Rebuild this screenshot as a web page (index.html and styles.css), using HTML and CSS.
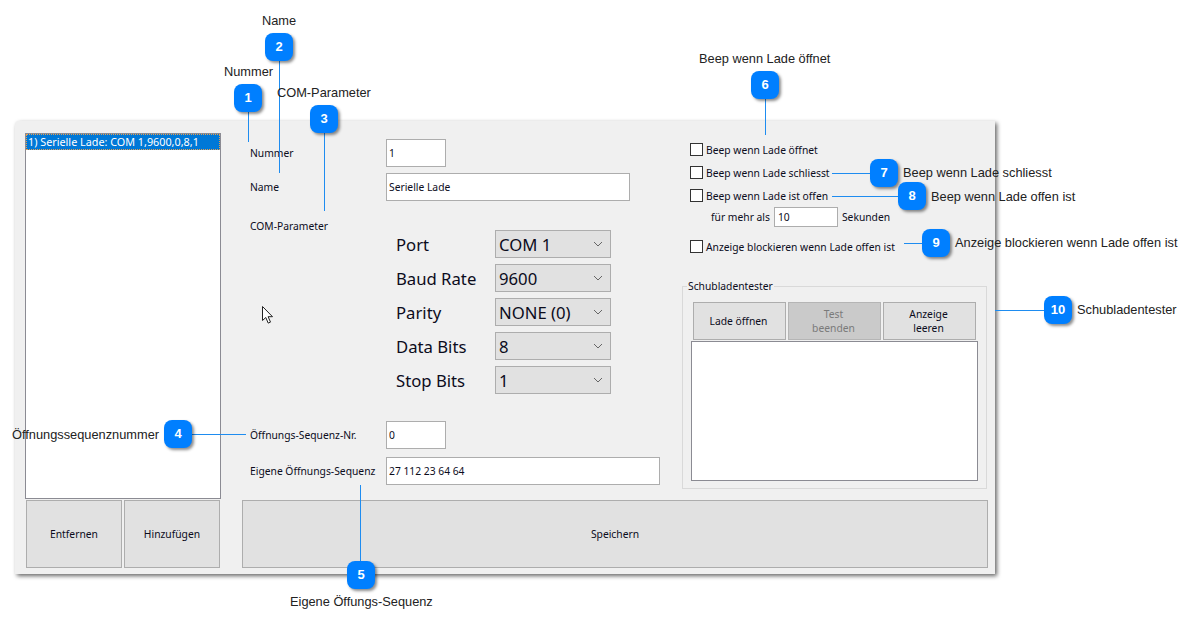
FILE: index.html
```html
<!DOCTYPE html>
<html lang="de">
<head>
<meta charset="utf-8">
<title>Serielle Lade</title>
<link rel="stylesheet" href="styles.css">
</head>
<body>
<div class="window">
  <div class="left">
    <div class="list"><div class="list-item">1) Serielle Lade: COM 1,9600,0,8,1</div></div>
    <div class="list-buttons">
      <button class="btn">Entfernen</button>
      <button class="btn">Hinzufügen</button>
    </div>
  </div>
  <div class="main">
    <div class="upper">
      <div class="form">
        <div class="row"><span class="label">Nummer</span><input class="field short" value="1"></div>
        <div class="row"><span class="label">Name</span><input class="field name" value="Serielle Lade"></div>
        <div class="com">
          <span class="label com-label">COM-Parameter</span>
          <div class="params">
            <span class="p-label">Port</span><div class="combo"><span>COM 1</span><svg class="chev" width="10" height="6" viewBox="0 0 10 6"><path d="M1 1l4 4 4-4"/></svg></div>
            <span class="p-label">Baud Rate</span><div class="combo"><span>9600</span><svg class="chev" width="10" height="6" viewBox="0 0 10 6"><path d="M1 1l4 4 4-4"/></svg></div>
            <span class="p-label">Parity</span><div class="combo"><span>NONE (0)</span><svg class="chev" width="10" height="6" viewBox="0 0 10 6"><path d="M1 1l4 4 4-4"/></svg></div>
            <span class="p-label">Data Bits</span><div class="combo"><span>8</span><svg class="chev" width="10" height="6" viewBox="0 0 10 6"><path d="M1 1l4 4 4-4"/></svg></div>
            <span class="p-label">Stop Bits</span><div class="combo"><span>1</span><svg class="chev" width="10" height="6" viewBox="0 0 10 6"><path d="M1 1l4 4 4-4"/></svg></div>
          </div>
        </div>
        <div class="row seq-nr"><span class="label">Öffnungs-Sequenz-Nr.</span><input class="field short" value="0"></div>
        <div class="row seq"><span class="label">Eigene Öffnungs-Sequenz</span><input class="field wide" value="27 112 23 64 64"></div>
      </div>
      <div class="side">
        <label class="check"><input type="checkbox">Beep wenn Lade öffnet</label>
        <label class="check"><input type="checkbox">Beep wenn Lade schliesst</label>
        <label class="check"><input type="checkbox">Beep wenn Lade ist offen</label>
        <div class="secs"><span>für mehr als</span><input class="field tiny" value="10"><span>Sekunden</span></div>
        <label class="check block"><input type="checkbox">Anzeige blockieren wenn Lade offen ist</label>
        <fieldset class="tester">
          <legend>Schubladentester</legend>
          <div class="tester-buttons">
            <button class="btn">Lade öffnen</button>
            <button class="btn off">Test<br>beenden</button>
            <button class="btn">Anzeige<br>leeren</button>
          </div>
          <textarea class="log"></textarea>
        </fieldset>
      </div>
    </div>
    <button class="btn save">Speichern</button>
  </div>
</div>

<svg class="cursor" width="14" height="20" viewBox="0 0 14 20"><path d="M1.5 1.5v14l3.3-3 2.4 5.6 2.3-1-2.4-5.4h4.4z"/></svg>

<div class="line l1"></div><div class="line l2"></div><div class="line l3"></div><div class="line l4"></div><div class="line l5"></div>
<div class="line l6"></div><div class="line l7"></div><div class="line l8"></div><div class="line l9"></div><div class="line l10"></div>

<div class="badge b1">1</div><span class="note n1">Nummer</span>
<div class="badge b2">2</div><span class="note n2">Name</span>
<div class="badge b3">3</div><span class="note n3">COM-Parameter</span>
<div class="badge b4">4</div><span class="note n4">Öffnungssequenznummer</span>
<div class="badge b5">5</div><span class="note n5">Eigene Öffungs-Sequenz</span>
<div class="badge b6">6</div><span class="note n6">Beep wenn Lade öffnet</span>
<div class="badge b7">7</div><span class="note n7">Beep wenn Lade schliesst</span>
<div class="badge b8">8</div><span class="note n8">Beep wenn Lade offen ist</span>
<div class="badge b9">9</div><span class="note n9">Anzeige blockieren wenn Lade offen ist</span>
<div class="badge b10">10</div><span class="note n10">Schubladentester</span>
</body>
</html>
```
FILE: styles.css
```css
* { box-sizing: border-box; }
html, body { margin: 0; height: 626px; overflow: hidden; background: #fff; }
body {
  padding: 121px 0 0 15px;
  font: 10.3px/14px "Noto Sans", sans-serif;
  color: #0c0c1c;
}
.window {
  width: 980px;
  height: 453px;
  padding: 12px 7px 6px 10px;
  display: flex;
  gap: 21px;
  background: #f0f0f0;
  border-radius: 4px 0 0 0;
  box-shadow: 2px 2px 4px rgba(0,0,0,.6);
}
.left { width: 196px; display: flex; flex-direction: column; }
.list { height: 366px; background: #fff; border: 1px solid #8b8b93; }
.list-item {
  height: 16px;
  padding-left: 2px;
  background: #0078d7;
  color: #fff;
  font-size: 10.8px;
  line-height: 15px;
  outline: 1px dotted #e8a050;
  outline-offset: -1px;
  white-space: nowrap;
}
.list-buttons { display: flex; gap: 2px; margin: 1px 1px 0; }
.list-buttons .btn { width: 96px; height: 68px; }
.btn {
  font: inherit;
  color: inherit;
  padding: 0;
  background: #e1e1e1;
  border: 1px solid #adadad;
}
.main { width: 746px; display: flex; flex-direction: column; }
.upper { height: 367px; display: flex; }
.form { width: 440px; padding: 6px 0 0 8px; }
.row { display: flex; align-items: center; height: 28px; }
.row + .row { margin-top: 6px; }
.label { width: 136px; flex: none; white-space: nowrap; }
.field {
  font: inherit;
  color: inherit;
  height: 28px;
  padding: 0 2px;
  background: #fff;
  border: 1px solid #adadad;
  outline: none;
}
.short { width: 60px; }
.name { width: 244px; }
.wide { width: 274px; }
.tiny { width: 64px; height: 20px; padding: 0 3px; }
.com { display: flex; margin-top: 18px; }
.com-label { height: 14px; }
.params {
  display: grid;
  grid-template-columns: 99px 116px;
  grid-auto-rows: 28px;
  row-gap: 6px;
  align-items: center;
  margin: 11px 0 0 10px;
}
.p-label { font-size: 16.7px; padding-top: 2px; }
.combo {
  height: 28px;
  padding: 2px 3px 0;
  display: flex;
  align-items: center;
  justify-content: space-between;
  font-size: 16.7px;
  background: #e1e1e1;
  border: 1px solid #adadad;
}
.chev { margin: -2px 4px 0 0; }
.chev path { fill: none; stroke: #666; stroke-width: 1; }
.seq-nr { margin-top: 27px; }
.row.seq { margin-top: 8px; }
.side { padding: 5px 0 0 8px; flex: 1; }
.check { display: flex; align-items: center; height: 23px; }
.check input {
  appearance: none;
  width: 13px;
  height: 13px;
  margin: 0 3px 0 0;
  background: #fff;
  border: 1px solid #333;
}
.secs { display: flex; align-items: center; gap: 4px; height: 20px; margin-left: 21px; }
.block { margin-top: 8px; }
.tester {
  width: 305px;
  height: 210px;
  margin: 21px 0 0 -8px;
  padding: 9px 0 0 8px;
  border: 1px solid #d9d9d9;
  min-width: 0;
}
.tester legend { padding: 0 1px; margin-left: -4px; }
.tester-buttons { display: flex; gap: 2px; margin-left: 2px; }
.tester-buttons .btn { width: 93px; height: 38px; line-height: 14px; padding-right: 2px; }
.btn.off { background: #cacaca; color: #7a7a7a; border-color: #b5b5b5; }
.log {
  display: block;
  width: 287px;
  height: 140px;
  margin: 1px 0 0 0;
  background: #fff;
  border: 1px solid #8b8b93;
  resize: none;
  outline: none;
}
.save { width: 746px; height: 68px; }

.cursor { position: absolute; left: 261px; top: 305px; }
.cursor path { fill: #fff; stroke: #222; stroke-width: 1; }

.line { position: absolute; background: #1e8cf0; }
.l1 { left: 248px; top: 112px; width: 1px; height: 30px; }
.l2 { left: 279px; top: 61px; width: 1px; height: 112px; }
.l3 { left: 324px; top: 133px; width: 1px; height: 78px; }
.l4 { left: 192px; top: 434px; width: 54px; height: 1px; }
.l5 { left: 360px; top: 485px; width: 1px; height: 76px; }
.l6 { left: 765px; top: 99px; width: 1px; height: 36px; }
.l7 { left: 832px; top: 173px; width: 38px; height: 1px; }
.l8 { left: 832px; top: 196px; width: 66px; height: 1px; }
.l9 { left: 904px; top: 243px; width: 18px; height: 1px; }
.l10 { left: 995px; top: 310px; width: 49px; height: 1px; }

.badge {
  position: absolute;
  width: 28px;
  height: 28px;
  border-radius: 8px;
  background: #007fff;
  color: #fff;
  font: bold 13px/28px "Liberation Sans", sans-serif;
  text-align: center;
  box-shadow: 2px 2px 3px rgba(0,0,0,.45);
}
.b1 { left: 234px; top: 84px; }
.b2 { left: 265px; top: 33px; }
.b3 { left: 310px; top: 105px; }
.b4 { left: 164px; top: 420px; }
.b5 { left: 347px; top: 561px; }
.b6 { left: 751px; top: 71px; }
.b7 { left: 870px; top: 159px; }
.b8 { left: 898px; top: 182px; }
.b9 { left: 922px; top: 229px; }
.b10 { left: 1044px; top: 296px; }

.note {
  position: absolute;
  font: 12.8px/14px "Liberation Sans", sans-serif;
  color: #222;
  white-space: nowrap;
}
.n1 { left: 224px; top: 65px; }
.n2 { left: 262px; top: 14px; }
.n3 { left: 277px; top: 86px; }
.n4 { left: 12px; top: 428px; }
.n5 { left: 290px; top: 595px; }
.n6 { left: 699px; top: 52px; }
.n7 { left: 903px; top: 166px; }
.n8 { left: 931px; top: 190px; }
.n9 { left: 955px; top: 236px; }
.n10 { left: 1077px; top: 303px; }
```
